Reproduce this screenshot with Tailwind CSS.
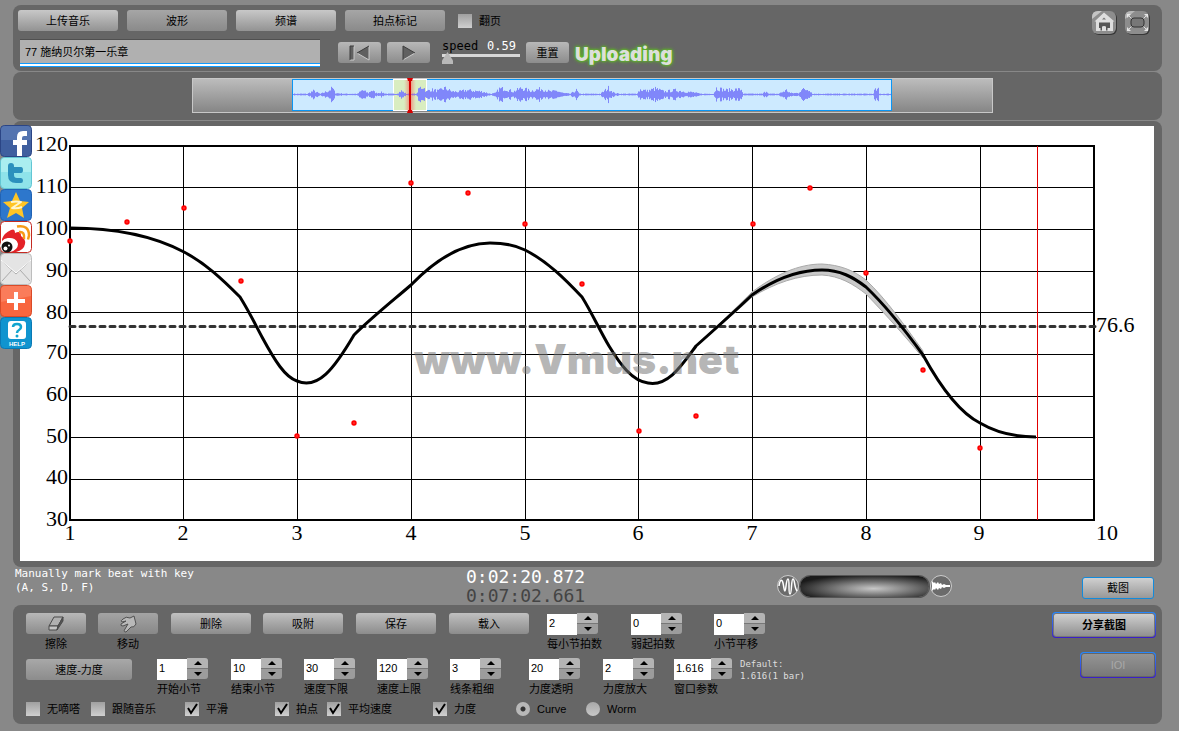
<!DOCTYPE html>
<html lang="zh-CN">
<head>
<meta charset="utf-8">
<meta name="viewport" content="width=device-width, initial-scale=1">
<title>Vmus.net</title>
<script src="https://cdn.jsdelivr.net/npm/@tailwindcss/browser@4"></script>
</head>
<body class="relative min-h-screen bg-[#888888] pt-[5px] pr-[17px] pl-[13px] pb-[7px] font-['Liberation_Sans','Noto_Sans_CJK_SC',sans-serif] text-[11px] leading-4 text-black">

<header class="flex h-[66px] justify-between rounded-t-lg rounded-b-lg bg-[#666666] pt-[5px] pr-3 pl-[5px]">
  <div class="flex flex-col gap-2">
    <div class="flex items-center gap-[9px]">
      <button class="h-[21px] w-[100px] rounded-[3px] bg-linear-to-b from-[#c8c8c8] to-[#939393]">上传音乐</button>
      <button class="h-[21px] w-[100px] rounded-[3px] bg-linear-to-b from-[#a6a6a6] to-[#8a8a8a]">波形</button>
      <button class="h-[21px] w-[100px] rounded-[3px] bg-linear-to-b from-[#c8c8c8] to-[#939393]">频谱</button>
      <button class="h-[21px] w-[100px] rounded-[3px] bg-linear-to-b from-[#a6a6a6] to-[#8a8a8a]">拍点标记</button>
      <label class="ml-1 flex items-center gap-[7px]"><input type="checkbox" class="size-[14px] appearance-none bg-linear-to-b from-[#a0a0a0] to-[#d0d0d0]">翻页</label>
    </div>
    <div class="flex items-start">
      <input type="text" aria-label="曲目" value="77 施纳贝尔第一乐章" class="ml-[2px] h-[28px] w-[300px] border-t border-b border-t-[#505050] border-b-[#0f9bff] bg-[#b0b0b0] px-[5px] pb-[4px] text-[11px] shadow-[inset_0_-2px_0_#fff,inset_0_-3px_0_#0f9bff]">
      <button aria-label="回到开头" class="mt-[3px] ml-[18px] flex h-[21px] w-[43px] items-center justify-center rounded-[3px] bg-linear-to-b from-[#b8b8b8] to-[#8c8c8c]">
        <svg width="22" height="18" viewBox="0 0 22 18"><path d="M1 2h4v14H1zM20 2v14L8 9z" fill="#606060"/><path d="M5 2v14H1M8 9l12 7V2" fill="none" stroke="#c9c9c9"/><path d="M1 16V2h4M20 2L8 9" fill="none" stroke="#3c3c3c"/></svg>
      </button>
      <button aria-label="播放" class="mt-[3px] ml-[6px] flex h-[21px] w-[43px] items-center justify-center rounded-[3px] bg-linear-to-b from-[#b8b8b8] to-[#8c8c8c]">
        <svg width="16" height="18" viewBox="0 0 16 18"><path d="M2 2v14l12-7z" fill="#606060"/><path d="M2 16l12-7" stroke="#c9c9c9"/><path d="M14 9L2 2v14" fill="none" stroke="#3c3c3c"/></svg>
      </button>
      <div class="ml-3 flex w-[78px] flex-col font-['DejaVu_Sans_Mono',monospace] text-[12px] leading-[14px]">
        <div class="flex justify-between pr-1"><label for="speed">speed</label><output for="speed" class="text-white">0.59</output></div>
        <input id="speed" type="range" min="0" max="10" step="0.01" value="0" class="mt-px h-3 w-full appearance-none bg-[linear-gradient(#d8d8d8,#d8d8d8)] bg-[length:100%_3px] bg-[0_0] bg-no-repeat [&::-webkit-slider-thumb]:-mt-1 [&::-webkit-slider-thumb]:h-3 [&::-webkit-slider-thumb]:w-[11px] [&::-webkit-slider-thumb]:appearance-none [&::-webkit-slider-thumb]:bg-[#b8b8b8] [&::-webkit-slider-thumb]:[clip-path:polygon(50%_0,100%_70%,100%_100%,0_100%,0_70%)]">
      </div>
      <button class="mt-[3px] ml-[6px] h-[21px] w-[43px] rounded-[3px] bg-linear-to-b from-[#b8b8b8] to-[#8c8c8c]">重置</button>
      <span class="mt-1 ml-[6px] font-[Inter,sans-serif] text-[19px] leading-6 font-black text-[#dcdfda] [text-shadow:0_0_3px_#5fc41f,0_0_4px_#5fc41f,0_0_2px_#4fa81c]">Uploading</span>
    </div>
  </div>
  <nav class="flex gap-[7px]">
    <button aria-label="主页" class="size-[26px]">
      <svg viewBox="0 0 26 26"><rect x="2" y="2" width="24" height="23" rx="6" fill="#383838"/><rect x="1" y="1" width="24" height="23" rx="6" fill="#8d8d8d"/><path d="M1 9V7q0-6 6-6h4z" fill="#c4c4c4"/><path d="M13 2.500L3.500 11.500H5V21h17V11.500h1.500z" fill="#dedede"/><path d="M8 12.500h11V18h-2.500v2.500H15V17q0-1-2-1t-2 1v3.500H9.500V18H8z" fill="#555"/><path d="M11 9.500l2-2 2 2z" fill="#777"/></svg>
    </button>
    <button aria-label="全屏" class="size-[26px]">
      <svg viewBox="0 0 26 26"><rect x="2" y="2" width="24" height="23" rx="6" fill="#383838"/><rect x="1" y="1" width="24" height="23" rx="6" fill="#8d8d8d"/><path d="M1 9V7q0-6 6-6h4z" fill="#b8b8b8"/><path d="M3 8V4h4zM20 4h4v4zM3 17v4h4zM24 17v4h-4z" fill="#e6e6e6"/><path d="M4 5l4 4M23 5l-4 4M4 20l4-4M23 20l-4-4" stroke="#dedede"/><rect x="7" y="8" width="13" height="9" rx="3" fill="#777" stroke="#333"/></svg>
    </button>
  </nav>
</header>

<section aria-label="波形导航" class="mt-px rounded-lg bg-[#666666] pt-[6px] pb-[7px]">
  <svg class="ml-[15.580%] block h-[35px] w-[69.714%]" viewBox="192 78 801 35">
    <defs>
      <linearGradient id="bar" x2="0" y2="1"><stop stop-color="#bdbdbd"/><stop offset="1" stop-color="#858585"/></linearGradient>
      <linearGradient id="glow"><stop stop-color="#f55" stop-opacity="0"/><stop offset=".5" stop-color="#f33" stop-opacity=".5"/><stop offset="1" stop-color="#f55" stop-opacity="0"/></linearGradient>
    </defs>
    <rect x="192.500" y="78.500" width="800" height="34" fill="url(#bar)" stroke="#c8c8c8"/>
    <rect x="292.500" y="79.500" width="599" height="31" fill="#cdeaff" stroke="#0a96f5"/>
    <rect x="393.500" y="79.500" width="33" height="31" fill="#d9edc0" stroke="#fff"/>
    <path id="wave" fill="none" stroke="#8087fa"/>
    <rect x="404" y="80" width="12" height="30" fill="url(#glow)"/>
    <path d="M410 79v33" stroke="#d80000" stroke-width="2"/><path d="M407 78h6l-1 3h-4zM407 113h6l-1-3h-4z" fill="#d80000"/>
  </svg>
</section>

<main class="mt-px rounded-lg bg-[#666666] pt-[5px] pr-2 pb-[6px] pl-[7px]">
  <svg class="block h-auto w-full bg-white" viewBox="20 126 1134 435" role="img" aria-label="速度曲线">
    <g id="grid" stroke="#000" shape-rendering="crispEdges"></g>
    <rect x="70" y="146" width="1024" height="374" fill="none" stroke="#000" stroke-width="2"/>
    <path d="M696 346C714 329 734 310 752 292C775 275 798 264 822 264C840 265 853 270 866 280C887 300 905 326 923 351L923 358C905 336 887 316 866 294C853 284 840 276 822 275C798 275 775 283 752 297C734 314 714 331 696 346Z" fill="#c9c9c9" stroke="#aaa"/>
    <path d="M1037.500 146V520" stroke="#e00000"/>
    <path d="M70 326.500H1096" stroke="#333" stroke-width="3" stroke-dasharray="5 5" stroke-linecap="round"/>
    <path d="M70 228C110 228 150 234 184 252C205 263 222 279 240 297C250 313 256 326 262 337C275 361 285 377 297 381C318 390 334 369 354 335C370 319 390 303 411 285C440 255 465 243 490 243C505 243 515 245 525 250C547 261 565 279 582 297C592 313 600 331 609 346C620 364 632 381 648 383C668 387 682 365 696 346C714 330 734 312 752 295C775 279 798 270 822 270C840 270 853 277 866 287C887 307 905 330 923 355C940 386 960 413 980 423C997 433 1017 437 1036 437" fill="none" stroke="#000" stroke-width="3"/>
    <g id="dots" fill="#ff6060" stroke="#ff0000" stroke-width="2"></g>
    <text x="414" y="374" class="font-[Inter,sans-serif] text-[41px] font-black" fill="#777" fill-opacity=".55">www.Vmus.net</text>
    <g class="font-['Liberation_Serif',serif] text-[22px]">
      <g text-anchor="end">
        <text x="68" y="151">120</text><text x="68" y="193">110</text><text x="68" y="235">100</text><text x="68" y="277">90</text><text x="68" y="319">80</text>
        <text x="68" y="359">70</text><text x="68" y="401">60</text><text x="68" y="443">50</text><text x="68" y="484">40</text><text x="68" y="526">30</text>
      </g>
      <g text-anchor="middle">
        <text x="70" y="540">1</text><text x="183" y="540">2</text><text x="297" y="540">3</text><text x="411" y="540">4</text><text x="525" y="540">5</text>
        <text x="638" y="540">6</text><text x="752" y="540">7</text><text x="866" y="540">8</text><text x="979" y="540">9</text><text x="1107" y="540">10</text>
      </g>
      <text x="1096" y="332">76.6</text>
    </g>
  </svg>
</main>

<section class="flex h-[38px] items-start pr-2 pl-[2px]">
  <p class="w-[451px] font-['DejaVu_Sans_Mono',monospace] text-[11px] leading-[14px] text-white">Manually mark beat with key<br>(A, S, D, F)</p>
  <div class="w-[310px] font-['DejaVu_Sans_Mono',monospace] text-[18px] leading-[19px]"><div class="text-white">0:02:20.872</div><div class="text-[#444]">0:07:02.661</div></div>
  <div class="mt-[7px] flex items-center">
    <svg width="24" height="24" viewBox="0 0 24 24" fill="none" stroke="#fff"><circle cx="12" cy="12" r="10.500" fill="#6b6b6b" stroke="#ccc"/><path d="M3 12C4 5 6 5 7 9s1 8 2 8 1-12 3-12 0 15 2 15 1-15 3-15 1 8 4 12" stroke-width="1.500"/></svg>
    <input type="range" aria-label="混音" class="h-[21px] w-[129px] appearance-none rounded-full bg-[radial-gradient(ellipse_at_57%_60%,#c8c8c8,#868686_30%,#1a1a1a_78%)] shadow-[0_0_0_1px_#555] [&::-webkit-slider-thumb]:appearance-none">
    <svg width="24" height="24" viewBox="0 0 24 24" fill="none" stroke="#fff"><circle cx="12" cy="12" r="10.500" fill="#6b6b6b" stroke="#ccc"/><path d="M3 7l2 2 1-1 1 2 2-2 1 2 2-1 1 2 2-1 2 1h4v2h-4l-2 1-2-1-1 2-2-1-1 2-2-2-1 2-1-1-2 2z" fill="#fff" stroke="none"/></svg>
  </div>
  <button class="mt-[10px] ml-auto h-[22px] w-[72px] rounded-[3px] border border-[#128bdd] bg-linear-to-b from-[#d0d0d0] to-[#989898] leading-4">截图</button>
</section>

<footer class="flex justify-between rounded-lg bg-[#666666] pt-2 pr-[6px] pb-[7px] pl-[13px]">
  <form class="flex flex-col">
    <div class="grid h-[45px] grid-cols-[72px_73px_92px_93px_93px_98px_84px_83px_60px] items-start">
      <label class="flex w-[60px] flex-col items-center gap-[2px]">
        <button type="button" aria-label="擦除" class="flex h-[21px] w-full items-center justify-center rounded-[3px] bg-linear-to-b from-[#b8b8b8] to-[#8c8c8c]"><svg width="18" height="18" viewBox="0 0 18 18" fill="#b0b0b0" stroke="#4a4a4a" stroke-linejoin="round"><path d="M7 2h9l-5 9H2z"/><path d="M2 11v4h8l1-4z" fill="#c4c4c4"/><path d="M11 11l-1 4 6-9V2z" fill="#555"/></svg></button>
        <span>擦除</span>
      </label>
      <label class="flex w-[60px] flex-col items-center gap-[2px]">
        <button type="button" aria-label="移动" class="flex h-[21px] w-full items-center justify-center rounded-[3px] bg-linear-to-b from-[#a4a4a4] to-[#888888]"><svg width="18" height="18" viewBox="0 0 18 18" fill="#b8b8b8" stroke="#505050" stroke-linejoin="round"><path d="M4 4Q7 1 11 3L15 1 17 9Q15 13 12 12L7 17Q4 17 6 14L9 9 4 11Q1 11 2 9L7 6 3 7Q1 6 4 4Z"/></svg></button>
        <span>移动</span>
      </label>
      <button type="button" class="h-[21px] w-[80px] rounded-[3px] bg-linear-to-b from-[#c0c0c0] to-[#8c8c8c]">删除</button>
      <button type="button" class="h-[21px] w-[80px] rounded-[3px] bg-linear-to-b from-[#c0c0c0] to-[#8c8c8c]">吸附</button>
      <button type="button" class="h-[21px] w-[80px] rounded-[3px] bg-linear-to-b from-[#c0c0c0] to-[#8c8c8c]">保存</button>
      <button type="button" class="h-[21px] w-[80px] rounded-[3px] bg-linear-to-b from-[#c0c0c0] to-[#8c8c8c]">载入</button>
      <div data-spin="每小节拍数" data-value="2"></div>
      <div data-spin="弱起拍数" data-value="0"></div>
      <div data-spin="小节平移" data-value="0"></div>
    </div>
    <div class="grid h-[43px] grid-cols-[131px_74px_73px_73px_73px_79px_74px_71px_66px_80px] items-start">
      <button type="button" class="mt-px h-[21px] w-[106px] rounded-[3px] bg-linear-to-b from-[#a8a8a8] to-[#8c8c8c]">速度-力度</button>
      <div data-spin="开始小节" data-value="1"></div>
      <div data-spin="结束小节" data-value="10"></div>
      <div data-spin="速度下限" data-value="30"></div>
      <div data-spin="速度上限" data-value="120"></div>
      <div data-spin="线条粗细" data-value="3"></div>
      <div data-spin="力度透明" data-value="20"></div>
      <div data-spin="力度放大" data-value="2"></div>
      <div data-spin="窗口参数" data-value="1.616" data-wide></div>
      <p class="font-['DejaVu_Sans_Mono',monospace] text-[9px] leading-3 text-[#dedede]">Default:<br>1.616(1 bar)</p>
    </div>
    <div class="grid h-4 grid-cols-[65px_94px_90px_52px_106px_83px_70px_60px] items-center whitespace-nowrap">
      <label class="flex items-center gap-[7px]"><input type="checkbox" class="size-[14px] appearance-none bg-linear-to-b from-[#a0a0a0] to-[#d0d0d0]">无嘀嗒</label>
      <label class="flex items-center gap-[7px]"><input type="checkbox" class="size-[14px] appearance-none bg-linear-to-b from-[#a0a0a0] to-[#d0d0d0]">跟随音乐</label>
      <label data-check class="relative flex items-center gap-[7px]"><input type="checkbox" checked class="size-[14px] appearance-none bg-linear-to-b from-[#a0a0a0] to-[#d0d0d0]">平滑</label>
      <label data-check class="relative flex items-center gap-[7px]"><input type="checkbox" checked class="size-[14px] appearance-none bg-linear-to-b from-[#a0a0a0] to-[#d0d0d0]">拍点</label>
      <label data-check class="relative flex items-center gap-[7px]"><input type="checkbox" checked class="size-[14px] appearance-none bg-linear-to-b from-[#a0a0a0] to-[#d0d0d0]">平均速度</label>
      <label data-check class="relative flex items-center gap-[7px]"><input type="checkbox" checked class="size-[14px] appearance-none bg-linear-to-b from-[#a0a0a0] to-[#d0d0d0]">力度</label>
      <label class="flex items-center gap-[7px]"><input type="radio" name="mode" checked class="size-[14px] appearance-none rounded-full bg-[radial-gradient(circle,#333_2px,#b8b8b8_3px)]">Curve</label>
      <label class="flex items-center gap-[7px]"><input type="radio" name="mode" class="size-[14px] appearance-none rounded-full bg-linear-to-b from-[#a8a8a8] to-[#c8c8c8]">Worm</label>
    </div>
  </form>
  <div class="-mt-px flex flex-col items-end gap-[14px]">
    <button class="h-[26px] w-[104px] rounded-[4px] bg-linear-to-b from-[#2388ff] to-[#3a1cc8] p-px font-bold"><span class="flex h-full items-center justify-center rounded-[3px] border border-[#777] bg-linear-to-b from-[#d0d0d0] to-[#909090]">分享截图</span></button>
    <button disabled class="h-[26px] w-[76px] rounded-[4px] bg-linear-to-b from-[#2388ff] to-[#3a1cc8] p-px text-[#a8a8a8]"><span class="flex h-full items-center justify-center rounded-[3px] border border-[#666] bg-linear-to-b from-[#949494] to-[#787878]">IOI</span></button>
  </div>
</footer>

<aside aria-label="分享" class="absolute top-[125px] left-0 flex w-8 flex-col">
  <a href="#" aria-label="Facebook"><svg class="block size-8" viewBox="0 0 32 32"><rect x=".5" y=".5" width="31" height="31" rx="4" fill="#3f5f9f" stroke="#2b4585"/><path d="M1 5q0-4 4-4h22q4 0 4 4v10H1z" fill="#5474b0"/><path d="M17 31V20h-4v-5h4v-3q0-6 6-6h4v5h-3q-2 0-2 2v2h5v5h-5v11z" fill="#fff"/></svg></a>
  <a href="#" aria-label="Twitter"><svg class="block size-8" viewBox="0 0 32 32"><rect x=".5" y=".5" width="31" height="31" rx="4" fill="#8fe3ea" stroke="#62c6d4"/><path d="M1 5q0-4 4-4h22q4 0 4 4v10H1z" fill="#aaeef0"/><path d="M8 9q0-3 3-3t3 3v1h7q2 0 2 3t-2 3h-7v2q0 3 3 3h4q2 0 2 2.500T21 26h-5q-8 0-8-8z" fill="#2b90bd"/></svg></a>
  <a href="#" aria-label="QQ空间"><svg class="block size-8" viewBox="0 0 32 32"><rect x=".5" y=".5" width="31" height="31" rx="4" fill="#2d77cc" stroke="#2062b4"/><path d="M16 3l4 9 9 1-7 6 2 10-8-5-9 5 3-10-7-6 9-1z" fill="#ffc526"/><path d="M11 13q5-1 10 0l-9 6q5 1 10-1" fill="none" stroke="#fff6d0" stroke-width="2" stroke-linejoin="round"/></svg></a>
  <a href="#" aria-label="新浪微博"><svg class="block size-8" viewBox="0 0 32 32"><rect x=".5" y=".5" width="31" height="31" rx="4" fill="#fff" stroke="#c42a22"/><path d="M2 18q2-6 9-9 4-2 4 3 6-3 6 3 5 3 4 8-1 6-9 8H6q-4-6-4-13z" fill="#e42228"/><ellipse cx="9" cy="24" rx="9" ry="7" fill="#fff" transform="rotate(-10 9 24)"/><circle cx="7" cy="26" r="5.500" fill="#111"/><circle cx="5.500" cy="27.500" r="2" fill="#fff"/><circle cx="9" cy="24.500" r="1" fill="#fff"/><path d="M17 5.500q12-2 12 9l-1 4M19 11q6-1 5 7" fill="none" stroke="#f79a16" stroke-width="2.500"/></svg></a>
  <a href="#" aria-label="邮件"><svg class="block size-8" viewBox="0 0 32 32"><rect x=".5" y=".5" width="31" height="31" rx="4" fill="#e4e4e4" stroke="#bdbdbd"/><path d="M2 8l14 13L30 8M2 28l10-11M30 28L20 17" fill="none" stroke="#aaa"/><path d="M1 7l15 13L31 7" fill="none" stroke="#fff"/></svg></a>
  <a href="#" aria-label="更多"><svg class="block size-8" viewBox="0 0 32 32"><rect x=".5" y=".5" width="31" height="31" rx="4" fill="#f8663f" stroke="#d94a28"/><path d="M1 5q0-4 4-4h22q4 0 4 4v6L1 17z" fill="#fa7c5a"/><path d="M14 7h4v7h7v4h-7v7h-4v-7H7v-4h7z" fill="#fff"/></svg></a>
  <a href="#" aria-label="帮助"><svg class="block size-8" viewBox="0 0 32 32"><rect x=".5" y=".5" width="31" height="31" rx="4" fill="#1094cf" stroke="#0a79b4"/><rect x="8" y="4" width="18" height="18" rx="3" fill="#fff"/><path d="M13 10q0-3 4-3t4 3q0 2-2 3t-2 3" fill="none" stroke="#12a5cf" stroke-width="2.500"/><circle cx="17" cy="19" r="1.500" fill="#12a5cf"/><text x="17" y="29" text-anchor="middle" fill="#fff" class="font-['Liberation_Sans',sans-serif] text-[6px] font-bold">HELP</text></svg></a>
</aside>

<script>
// Numeric steppers: value box, up/down buttons and a caption underneath
document.querySelectorAll('[data-spin]').forEach((el, i) => {
  const wide = el.hasAttribute('data-wide');
  el.className = 'flex flex-col';
  el.innerHTML = `
    <div class="flex h-[22px]">
      <input id="spin${i}" type="text" value="${el.dataset.value}" class="${wide ? 'w-[37px]' : 'w-[30px]'} mt-px h-[21px] bg-white px-[2px] pb-1 text-[11px]">
      <div class="flex h-[21px] w-[21px] flex-col gap-px rounded-r-[3px] bg-[#777] overflow-hidden">
        <button type="button" aria-label="增加" class="flex h-[10px] items-center justify-center bg-[#b4b4b4]"><svg width="8" height="4" viewBox="0 0 8 4"><path d="M4 0l4 4H0z"/></svg></button>
        <button type="button" aria-label="减少" class="flex h-[10px] items-center justify-center bg-[#9c9c9c]"><svg width="8" height="4" viewBox="0 0 8 4"><path d="M0 0h8L4 4z"/></svg></button>
      </div>
    </div>
    <label for="spin${i}" class="mt-px whitespace-nowrap">${el.dataset.spin}</label>`;
});
document.querySelectorAll('[data-check]').forEach(el => el.insertAdjacentHTML('beforeend',
  '<svg class="pointer-events-none absolute top-0 left-0" width="16" height="16" viewBox="0 0 16 16" fill="none" stroke="#000" stroke-width="2"><path d="M3 7l3 5 6-9"/></svg>'));

// Chart grid and beat markers
let g = '';
[187, 229, 271, 312, 354, 396, 437, 479].forEach(y => g += `<path d="M70 ${y}.5H1094"/>`);
[183, 297, 411, 525, 638, 752, 866, 980].forEach(x => g += `<path d="M${x}.5 146V520"/>`);
document.getElementById('grid').innerHTML = g;
document.getElementById('dots').innerHTML = [[70,241],[127,222],[184,208],[241,281],[297,436],[354,423],[411,183],[468,193],[525,224],[582,284],[639,431],[696,416],[753,224],[810,188],[866,273],[923,370],[980,448]]
  .map(([x, y]) => `<circle cx="${x}" cy="${y}" r="1.700"/>`).join('');

// Audio overview: amplitude envelope as [x, half height]
const env = [[293,1],[307,1],[313,5],[320,1],[324,3],[328,5],[332,9],[335,2],[345,1],[357,1],[362,6],[368,2],[371,6],[376,2],[381,3],[386,1],[396,1],[401,5],[406,1],[416,1],[419,9],[423,11],[426,4],[430,7],[438,5],[444,9],[452,4],[459,4],[466,6],[474,5],[482,4],[490,1],[495,2],[499,8],[505,8],[513,4],[521,9],[530,5],[541,8],[550,4],[556,5],[563,2],[570,1],[576,6],[579,1],[600,1],[608,9],[614,2],[620,1],[636,1],[640,7],[647,5],[655,8],[664,4],[675,6],[684,4],[693,3],[700,1],[713,1],[716,9],[725,6],[735,7],[741,7],[743,1],[762,1],[766,5],[769,1],[778,1],[786,6],[790,2],[798,2],[801,7],[809,7],[812,1],[873,1],[874,6],[878,7],[879,1],[891,1]];
let d = '', seed = 7;
for (let x = 293, k = 0; x < 891; x++) {
  while (env[k + 1][0] < x) k++;
  const [x0, a0] = env[k], [x1, a1] = env[k + 1];
  seed = (seed * 16807) % 2147483647;
  const a = Math.max(.5, (a0 + (a1 - a0) * (x - x0) / (x1 - x0)) * (.4 + .6 * seed / 2147483647));
  d += `M${x + .5} ${(94.5 - a).toFixed(1)}V${(94.5 + a).toFixed(1)}`;
}
document.getElementById('wave').setAttribute('d', d);
</script>
</body>
</html>
